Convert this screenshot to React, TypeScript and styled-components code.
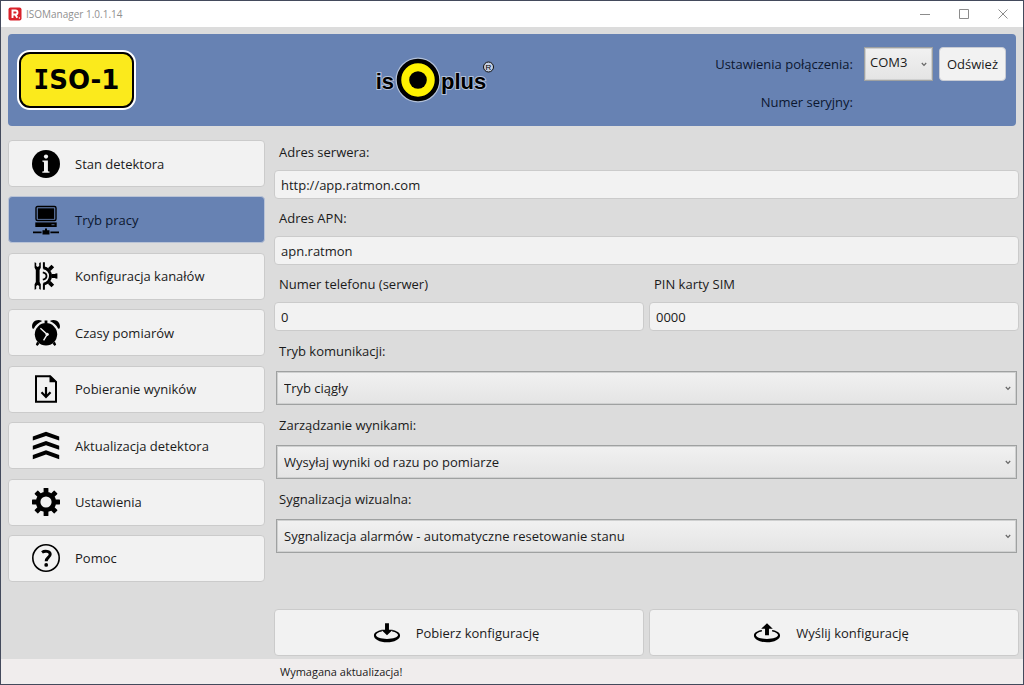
import React, { ReactNode } from "react";
import styled, { createGlobalStyle } from "styled-components";

const GlobalStyle = createGlobalStyle`
  *, *::before, *::after { box-sizing: border-box; }
  body {
    margin: 0;
    background: #dcdcdc;
    color: #1a1a1a;
    font-family: "Open Sans", "Noto Sans", sans-serif;
    font-size: 13px;
    line-height: 18px;
  }
  button, input, select { font: inherit; color: inherit; margin: 0; }
`;

const Window = styled.div`
  display: flex;
  flex-direction: column;
  min-height: 100vh;
  border: 1px solid #434a5c;
  background: #dcdcdc;
`;

const TitleBar = styled.header`
  display: flex;
  align-items: center;
  height: 26px;
  padding: 0 1px 0 7px;
  background: #ffffff;
`;

const Title = styled.span`
  flex: 1;
  margin-left: 4px;
  font-size: 10px;
  color: #8f8f8f;
`;

const WindowButton = styled.button`
  display: flex;
  align-items: center;
  justify-content: center;
  width: 39px;
  height: 26px;
  padding: 0;
  border: 0;
  background: transparent;
  color: #8c8c8c;
`;

const Banner = styled.section`
  display: grid;
  grid-template-columns: auto 1fr auto;
  align-items: center;
  height: 92px;
  margin: 7px 7px 0;
  padding: 0 10px 0 9px;
  border-radius: 4px;
  background: #6782b3;
`;

const ModelBadge = styled.div`
  padding: 2px;
  border-radius: 13px;
  background: #ffffff;
`;

const ModelName = styled.div`
  display: flex;
  align-items: center;
  justify-content: center;
  width: 115px;
  height: 56px;
  border: 2px solid #000000;
  border-radius: 11px;
  background: #fbea1c;
  color: #000000;
  font: bold 26px/54px "DejaVu Sans", sans-serif;
`;

const SerifLetter = styled.span`
  font-family: "DejaVu Sans Mono", monospace;
`;

const BrandArea = styled.div`
  display: flex;
  justify-content: center;
  padding-left: 28px;
`;

const Connection = styled.div`
  display: grid;
  grid-template-columns: 150px 69px 67px;
  grid-template-rows: 34px 34px;
  row-gap: 4px;
  column-gap: 6px;
  align-items: center;
  padding-top: 6px;
`;

const ConnectionLabel = styled.label`
  padding-right: 5px;
  text-align: right;
  white-space: nowrap;
  font-size: 13px;
  color: #0c1730;
`;

const RefreshButton = styled.button`
  height: 34px;
  padding: 0;
  border: 1px solid #c9ccd4;
  border-radius: 4px;
  background: #f2f2f2;
`;

const Main = styled.main`
  display: grid;
  grid-template-columns: 257px 1fr;
  column-gap: 9px;
  flex: 1;
  padding: 7px 4px 3px 7px;
`;

const Sidebar = styled.nav`
  display: flex;
  flex-direction: column;
  justify-content: space-between;
  padding: 7px 0 74px;
`;

const NavButton = styled.button<{ $active?: boolean }>`
  display: flex;
  align-items: center;
  gap: 14px;
  height: 47px;
  padding: 0 0 0 22px;
  border: 1px solid ${(p) => (p.$active ? "#b9c3d6" : "#cbcbcb")};
  border-radius: 4px;
  background: ${(p) => (p.$active ? "#6782b3" : "#f2f2f2")};
  color: ${(p) => (p.$active ? "#0c1730" : "#1a1a1a")};
  text-align: left;
`;

const Form = styled.form`
  display: flex;
  flex-direction: column;
  min-width: 0;
`;

const Columns = styled.div`
  display: grid;
  grid-template-columns: 1fr 1fr;
  column-gap: 5px;
`;

const Field = styled.div`
  display: flex;
  flex-direction: column;
  min-width: 0;
`;

const FieldLabel = styled.label<{ $tall?: boolean }>`
  padding: ${(p) => (p.$tall ? 0 : 2)}px 0 0 5px;
  line-height: ${(p) => (p.$tall ? 40 : 35)}px;
`;

const TextInput = styled.input`
  width: 100%;
  height: 29px;
  padding: 0 6px;
  border: 1px solid #cbcbcb;
  border-radius: 4px;
  background: #f2f2f2;
`;

const SelectWrap = styled.div<{ $inset?: boolean }>`
  display: grid;
  align-items: center;
  margin: 0 ${(p) => (p.$inset ? 2 : 0)}px;
  > * { grid-area: 1 / 1; }
  > svg { justify-self: end; margin-right: 6px; pointer-events: none; }
`;

const SelectBox = styled.select`
  appearance: none;
  width: 100%;
  height: 34px;
  padding: 0 20px 0 7px;
  border: 1px solid #9fa1a1;
  border-radius: 0;
  background: linear-gradient(#f1f1f1, #e4e4e4);
  box-shadow: inset 0 0 0 1px #cfd0d0;
`;

const PortSelect = styled(SelectBox)`
  padding: 0 14px 4px 5px;
`;

const Actions = styled(Columns)`
  margin-top: auto;
  padding-top: 16px;
`;

const ActionButton = styled.button`
  display: flex;
  align-items: center;
  justify-content: center;
  gap: 15px;
  height: 47px;
  padding: 0 6px 0 0;
  border: 1px solid #cbcbcb;
  border-radius: 4px;
  background: #f2f2f2;
`;

const StatusBar = styled.footer`
  height: 25px;
  padding-left: 279px;
  background: #f0eded;
  font-size: 11px;
  line-height: 25px;
`;

const Chevron = () => (
  <svg width="6" height="5" viewBox="0 0 6 5" fill="none" stroke="#666" strokeWidth="1.2" aria-hidden="true">
    <path d="M.8 1 3 3.4 5.2 1" />
  </svg>
);

const Icon = ({ children }: { children: ReactNode }) => (
  <svg width="30" height="30" viewBox="0 0 30 30" fill="#000" aria-hidden="true">
    {children}
  </svg>
);

const InfoIcon = () => (
  <Icon>
    <circle cx="15" cy="15" r="14" />
    <circle cx="15" cy="7.6" r="2.1" fill="#f2f2f2" />
    <path fill="#f2f2f2" d="M11.4 11.6h5.5v9.8c0 .8.4 1.1 1.6 1.2v1.1h-7.2v-1.1c1.3-.1 1.7-.4 1.7-1.2v-7.5c0-.8-.4-1.1-1.6-1.2z" />
  </Icon>
);

const ComputerIcon = () => (
  <Icon>
    <rect x="5" y="1.500" width="20" height="14" rx="1.500" fill="none" stroke="#000" strokeWidth="1.400" />
    <rect x="6.800" y="3.300" width="16.400" height="10.600" />
    <path d="M4.300 17.400h21.400v4.600H4.300z" />
    <path stroke="#6782b3" strokeWidth=".8" d="M20.500 19.700h3" />
    <path d="M14 23.400h2v1.800h2.500v4.200h-7v-4.200H14z" />
    <path d="M2 26.600h8.600v1.600H2zM19.400 26.600H28v1.600h-8.600z" />
  </Icon>
);

const ToolsIcon = () => (
  <Icon>
    <path d="M3.600 1.200 5.200 2v3l1.500 1 1.500-1V2l1.600-.8v5.600L8.600 9v12l1.200 2.200v5.600L8.200 28v-3l-1.500-1-1.500 1v3l-1.600.8v-5.600L4.800 21V9L3.600 6.800z" />
    <path d="M12.900 1.200v6.200M12.900 28.800v-6.200" stroke="#000" strokeWidth="2" />
    <path d="M12.500 6.800a8.300 8.300 0 0 1 0 16.400" fill="none" stroke="#000" strokeWidth="3" />
    <path d="m18.200 8.600 3.600-3.600M18.200 21.400l3.600 3.600M20.500 15h5.500" stroke="#000" strokeWidth="3.800" />
    <path d="M25.400 12.400v5.200" stroke="#000" strokeWidth="2" />
    <path d="M11.800 11.300c2.800.6 3.700 1.900 3.700 3.700s-.9 3.100-3.700 3.700" fill="none" stroke="#000" strokeWidth="1.800" />
  </Icon>
);

const AlarmIcon = () => (
  <Icon>
    <circle cx="15" cy="16.3" r="11.2" />
    <path d="M1.500 10.600C-.6 5 5.200-.4 11.200 3.100 7.200 4.800 4.400 7.200 2.800 10.800zM28.500 10.600C30.600 5 24.800-.4 18.800 3.100c4 1.700 6.800 4.100 8.400 7.700z" />
    <path d="M13.600 2.500h2.800v3h-2.800zM6.200 23.500l2.200 2.200L6.300 28l-1.500-1.400zM23.800 23.500l-2.200 2.200 2.100 2.300 1.500-1.400z" />
    <path d="m9.400 10.200 6.800 6.200-3.600 6" fill="none" stroke="#f2f2f2" strokeWidth="1.400" />
    <circle cx="16.2" cy="16.3" r="1.600" fill="#f2f2f2" />
  </Icon>
);

const DownloadFileIcon = () => (
  <Icon>
    <path d="M5 2.200h14.200l5.800 5.600v20H5z" fill="none" stroke="#000" strokeWidth="2" />
    <path d="M18.500 1.200 26 8.300h-7.500z" />
    <path d="M15 13v9.600M10.500 18.200 15 23l4.500-4.800" fill="none" stroke="#000" strokeWidth="2.200" />
  </Icon>
);

const UpdateIcon = () => (
  <Icon>
    <path d="m15 .8 13.200 4.800v4L15 5 1.800 9.600v-4zM15 10l13.200 4.800v4L15 14.200 1.800 18.800v-4zM15 19.200 28.200 24v4.300L15 23.400 1.800 28.300V24z" />
  </Icon>
);

const GearIcon = () => (
  <Icon>
    <circle cx="15" cy="15" r="7.900" fill="none" stroke="#000" strokeWidth="4.600" />
    {[0, 45, 90, 135, 180, 225, 270, 315].map((angle) => (
      <rect key={angle} x="12.600" y="1" width="4.800" height="6" rx=".6" transform={`rotate(${angle} 15 15)`} />
    ))}
  </Icon>
);

const HelpIcon = () => (
  <Icon>
    <circle cx="15" cy="15" r="13.200" fill="none" stroke="#000" strokeWidth="1.600" />
    <path d="M11 9.400c2.800-2 8.200-1.400 8.200 1.900 0 3.200-4 3.200-4 7" fill="none" stroke="#000" strokeWidth="3" />
    <circle cx="15.200" cy="21.900" r="1.900" />
  </Icon>
);

const Disc = () => (
  <path
    fillRule="evenodd"
    d="M9.500 7.300C4.300 8.200 1 10.300 1 13.200 1 17.300 7 20.500 15 20.500s14-3.200 14-7.300c0-2.900-3.300-5-8.500-5.900v1.500c3.800.7 6.300 2.100 6.300 3.800 0 2.400-5.200 4.200-11.800 4.200S3.200 15 3.200 12.600c0-1.700 2.500-3.100 6.300-3.800z"
  />
);

const ReceiveIcon = () => (
  <svg width="28" height="20" viewBox="0 0 30 21" aria-hidden="true">
    <Disc />
    <path d="M12.900 0h4.200v7h4.100L15 13 8.800 7h4.100z" />
  </svg>
);

const SendIcon = () => (
  <svg width="28" height="20" viewBox="0 0 30 21" aria-hidden="true">
    <Disc />
    <path d="m15 0 6.200 6h-4.100v7h-4.200V6H8.800z" />
  </svg>
);

const AppIcon = () => (
  <svg width="14" height="14" viewBox="0 0 14 14" aria-hidden="true">
    <rect x=".5" y=".5" width="13" height="13" rx="2" fill="#d9222a" />
    <path d="M4.500 11V3.500h3a2 2 0 0 1 0 4h-3M7.300 7.500l2 3.300" fill="none" stroke="#fff" strokeWidth="1.900" />
    <circle cx="11.400" cy="11" r=".7" fill="#fff" />
  </svg>
);

const BrandLogo = () => (
  <svg width="120" height="48" viewBox="0 0 120 48" role="img" aria-label="isoplus">
    <g
      fontFamily='"Liberation Sans Narrow", "Liberation Sans", sans-serif'
      fontWeight="bold"
      fontSize="22"
      stroke="#fff"
      strokeOpacity=".5"
      strokeWidth="2"
      paintOrder="stroke"
    >
      <text x="18" y="33" textAnchor="end">is</text>
      <text x="65" y="33">plus</text>
    </g>
    <circle cx="42" cy="24" r="22.500" fill="#fff" fillOpacity=".5" />
    <circle cx="42" cy="24" r="19" fill="#fff200" stroke="#000" strokeWidth="4.500" />
    <circle cx="42" cy="24" r="8.800" />
    <circle cx="112.500" cy="11" r="5" fill="#c5cfe2" stroke="#111" strokeWidth="1" />
    <text x="112.500" y="14" textAnchor="middle" fontFamily="Liberation Sans, sans-serif" fontSize="8">R</text>
  </svg>
);

const navItems = [
  { label: "Stan detektora", icon: <InfoIcon /> },
  { label: "Tryb pracy", icon: <ComputerIcon />, active: true },
  { label: "Konfiguracja kanałów", icon: <ToolsIcon /> },
  { label: "Czasy pomiarów", icon: <AlarmIcon /> },
  { label: "Pobieranie wyników", icon: <DownloadFileIcon /> },
  { label: "Aktualizacja detektora", icon: <UpdateIcon /> },
  { label: "Ustawienia", icon: <GearIcon /> },
  { label: "Pomoc", icon: <HelpIcon /> },
];

const textField = (id: string, label: string, value: string) => (
  <Field>
    <FieldLabel htmlFor={id}>{label}</FieldLabel>
    <TextInput id={id} type="text" defaultValue={value} />
  </Field>
);

const selectField = (id: string, label: string, value: string) => (
  <Field>
    <FieldLabel htmlFor={id} $tall>{label}</FieldLabel>
    <SelectWrap $inset>
      <SelectBox id={id}>
        <option>{value}</option>
      </SelectBox>
      <Chevron />
    </SelectWrap>
  </Field>
);

export default function App() {
  return (
    <Window>
      <GlobalStyle />
      <TitleBar>
        <AppIcon />
        <Title>ISOManager 1.0.1.14</Title>
        <WindowButton aria-label="Minimalizuj">
          <svg width="10" height="10" stroke="currentColor"><path d="M0 5.500h10" /></svg>
        </WindowButton>
        <WindowButton aria-label="Maksymalizuj">
          <svg width="10" height="10" fill="none" stroke="currentColor"><path d="M.5.5h9v9h-9z" /></svg>
        </WindowButton>
        <WindowButton aria-label="Zamknij">
          <svg width="10" height="10" stroke="currentColor"><path d="m.5.5 9 9m0-9-9 9" /></svg>
        </WindowButton>
      </TitleBar>

      <Banner>
        <ModelBadge>
          <ModelName><SerifLetter>I</SerifLetter>SO-1</ModelName>
        </ModelBadge>
        <BrandArea><BrandLogo /></BrandArea>
        <Connection>
          <ConnectionLabel htmlFor="port">Ustawienia połączenia:</ConnectionLabel>
          <SelectWrap>
            <PortSelect id="port">
              <option>COM3</option>
            </PortSelect>
            <Chevron />
          </SelectWrap>
          <RefreshButton type="button">Odśwież</RefreshButton>
          <ConnectionLabel as="span">Numer seryjny:</ConnectionLabel>
        </Connection>
      </Banner>

      <Main>
        <Sidebar>
          {navItems.map((item) => (
            <NavButton key={item.label} type="button" $active={item.active}>
              {item.icon}
              {item.label}
            </NavButton>
          ))}
        </Sidebar>

        <Form onSubmit={(e) => e.preventDefault()}>
          {textField("server", "Adres serwera:", "http://app.ratmon.com")}
          {textField("apn", "Adres APN:", "apn.ratmon")}
          <Columns>
            {textField("phone", "Numer telefonu (serwer)", "0")}
            {textField("pin", "PIN karty SIM", "0000")}
          </Columns>
          {selectField("mode", "Tryb komunikacji:", "Tryb ciągły")}
          {selectField("results", "Zarządzanie wynikami:", "Wysyłaj wyniki od razu po pomiarze")}
          {selectField("signal", "Sygnalizacja wizualna:", "Sygnalizacja alarmów - automatyczne resetowanie stanu")}
          <Actions>
            <ActionButton type="button"><ReceiveIcon />Pobierz konfigurację</ActionButton>
            <ActionButton type="button"><SendIcon />Wyślij konfigurację</ActionButton>
          </Actions>
        </Form>
      </Main>

      <StatusBar>Wymagana aktualizacja!</StatusBar>
    </Window>
  );
}
